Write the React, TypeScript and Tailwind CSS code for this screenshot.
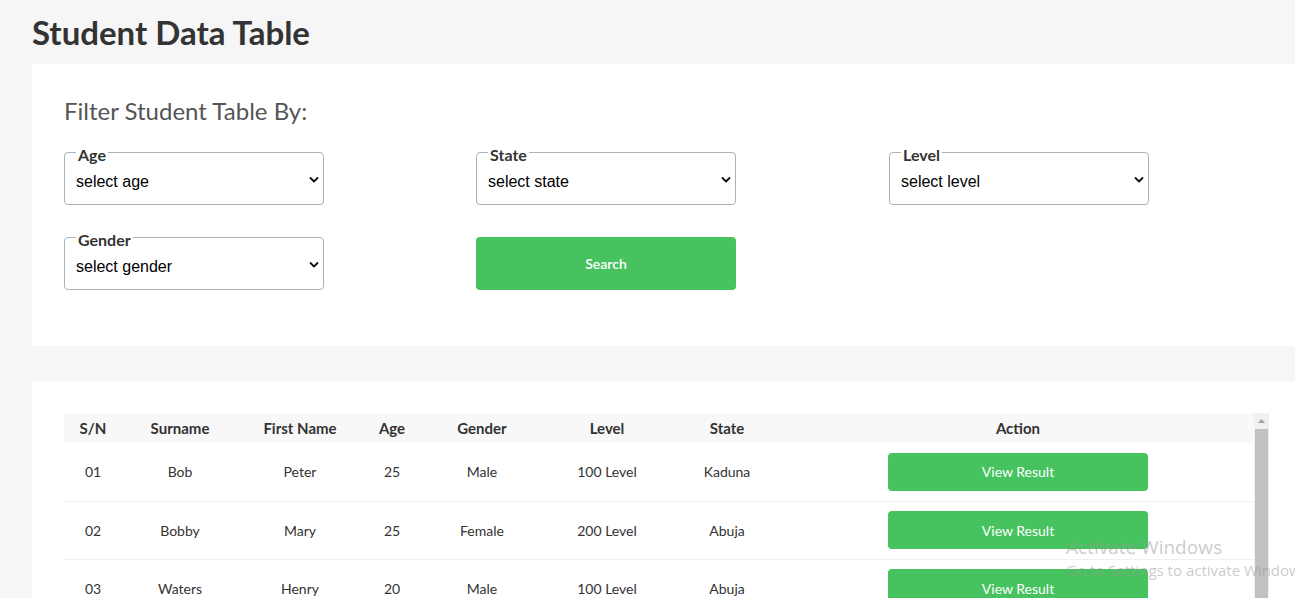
const filters = [
  { label: "Age", placeholder: "select age" },
  { label: "State", placeholder: "select state" },
  { label: "Level", placeholder: "select level" },
  { label: "Gender", placeholder: "select gender" },
];

const students = [
  { sn: "01", surname: "Bob", first: "Peter", age: 25, gender: "Male", level: "100 Level", state: "Kaduna" },
  { sn: "02", surname: "Bobby", first: "Mary", age: 25, gender: "Female", level: "200 Level", state: "Abuja" },
  { sn: "03", surname: "Waters", first: "Henry", age: 20, gender: "Male", level: "100 Level", state: "Abuja" },
  { sn: "04", surname: "Adams", first: "Grace", age: 22, gender: "Female", level: "300 Level", state: "Lagos" },
  { sn: "05", surname: "Okafor", first: "John", age: 24, gender: "Male", level: "400 Level", state: "Enugu" },
];

function FilterSelect({ label, placeholder }: { label: string; placeholder: string }) {
  return (
    <fieldset className="relative w-[260px] rounded-[4px] border border-[#a9b1b9] px-[11px] pb-[2px]">
      <legend className="relative top-[2px] px-[2px] text-[16px] font-bold leading-[19px] text-[#333]">{label}</legend>
      <select
        className="h-[40px] w-full appearance-none bg-transparent pl-0 text-[16px] text-black outline-none"
        style={{ fontFamily: '"Liberation Sans", Arial, sans-serif' }}
        defaultValue=""
      >
        <option value="">{placeholder}</option>
      </select>
      <svg
        className="pointer-events-none absolute right-[4px] top-[14px]"
        width="10"
        height="8"
        viewBox="0 0 10 8"
        fill="none"
      >
        <path d="M1.5 2 L5 5.5 L8.5 2" stroke="#111" strokeWidth="1.8" strokeLinecap="round" strokeLinejoin="round" />
      </svg>
    </fieldset>
  );
}

export default function App() {
  return (
    <div
      className="relative min-h-screen w-full overflow-hidden bg-[#f6f6f6] text-[#333]"
      style={{ fontFamily: "Lato, 'Open Sans', sans-serif" }}
    >
      <div className="w-[1333px] pl-8">
        {/* Title */}
        <div className="flex h-16 items-center">
          <h1 className="text-[33px] font-bold leading-[38px] text-[#333]">Student Data Table</h1>
        </div>

        {/* Filter card */}
        <div className="h-[282px] bg-white px-8 pt-8">
          <h2 className="text-[24px] leading-[29px] text-[#555]">Filter Student Table By:</h2>
          <div className="mt-[18px] grid grid-cols-[412px_413px_412px] gap-y-[23px]">
            <FilterSelect {...filters[0]} />
            <FilterSelect {...filters[1]} />
            <FilterSelect {...filters[2]} />
            <FilterSelect {...filters[3]} />
            <div className="flex items-end">
              <button className="h-[53px] w-[260px] rounded-[4px] bg-[#46c35f] text-[14px] font-semibold text-white">
                Search
              </button>
            </div>
          </div>
        </div>

        {/* Table card */}
        <div className="mt-[35px] bg-white px-8 pt-8 pb-8">
          <div className="flex w-[1205px]">
            <table className="w-[1190px] table-fixed border-collapse text-center text-[14px] text-[#333]">
              <colgroup>
                <col className="w-[58px]" />
                <col className="w-[116px]" />
                <col className="w-[124px]" />
                <col className="w-[60px]" />
                <col className="w-[120px]" />
                <col className="w-[130px]" />
                <col className="w-[110px]" />
                <col />
              </colgroup>
              <thead>
                <tr className="h-[30px] bg-[#f8f8f8] text-[15px] font-bold">
                  <th>S/N</th>
                  <th>Surname</th>
                  <th>First Name</th>
                  <th>Age</th>
                  <th>Gender</th>
                  <th>Level</th>
                  <th>State</th>
                  <th>Action</th>
                </tr>
              </thead>
              <tbody>
                {students.map((s) => (
                  <tr key={s.sn} className="h-[58px] border-b border-[#f0f0f0]">
                    <td>{s.sn}</td>
                    <td>{s.surname}</td>
                    <td>{s.first}</td>
                    <td>{s.age}</td>
                    <td>{s.gender}</td>
                    <td>{s.level}</td>
                    <td>{s.state}</td>
                    <td>
                      <button className="h-[38px] w-[260px] rounded-[4px] bg-[#46c35f] text-[14px] text-white">
                        View Result
                      </button>
                    </td>
                  </tr>
                ))}
              </tbody>
            </table>

            {/* Scrollbar */}
            <div className="flex w-[15px] flex-col items-center bg-[#f1f1f1]">
              <svg className="mt-[6px]" width="7" height="4" viewBox="0 0 7 4">
                <path d="M0 4 L3.5 0 L7 4 Z" fill="#a3a3a3" />
              </svg>
              <div className="mt-[6px] w-[13px] flex-1 bg-[#c1c1c1]" />
            </div>
          </div>
        </div>
      </div>

      {/* Windows activation watermark */}
      <div
        className="pointer-events-none absolute left-[1066px] top-[534px] whitespace-nowrap text-[rgba(150,150,150,0.5)]"
        style={{ fontFamily: '"Open Sans", "Noto Sans", sans-serif' }}
      >
        <div className="text-[19px] leading-[26px]">Activate Windows</div>
        <div className="text-[15px] leading-[20px]">Go to Settings to activate Windows.</div>
      </div>
    </div>
  );
}
